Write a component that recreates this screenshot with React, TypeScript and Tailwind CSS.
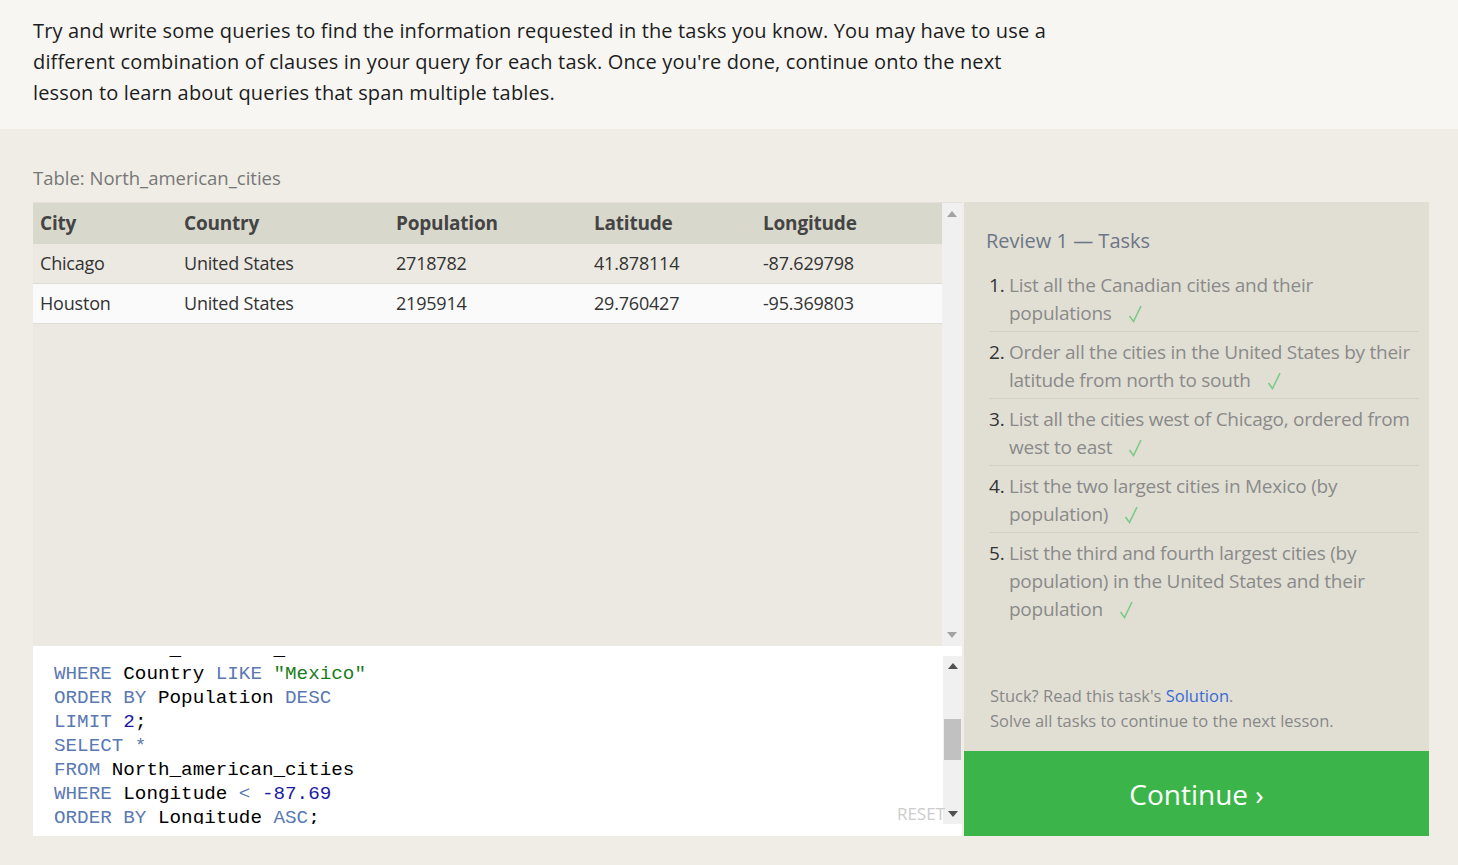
const cities = [
  { city: 'Chicago', country: 'United States', population: '2718782', lat: '41.878114', lng: '-87.629798' },
  { city: 'Houston', country: 'United States', population: '2195914', lat: '29.760427', lng: '-95.369803' },
];

const tasks = [
  'List all the Canadian cities and their populations',
  'Order all the cities in the United States by their latitude from north to south',
  'List all the cities west of Chicago, ordered from west to east',
  'List the two largest cities in Mexico (by population)',
  'List the third and fourth largest cities (by population) in the United States and their population',
];

const cols = 'grid grid-cols-[144px_212px_198px_169px_1fr]';

function K({ children }: { children: React.ReactNode }) {
  return <span className="text-[#5a79b3]">{children}</span>;
}

function Arrow({ up, color }: { up?: boolean; color: string }) {
  return (
    <svg width="10" height="6" viewBox="0 0 10 6" className="block">
      <polygon points={up ? '0,6 10,6 5,0' : '0,0 10,0 5,6'} fill={color} />
    </svg>
  );
}

function Check() {
  return (
    <svg width="14" height="18" viewBox="0 0 14 18" className="ml-[16px] inline-block align-[-3px]">
      <path d="M1.5 11 L5.5 16.5 L13 1" fill="none" stroke="#7cc98a" strokeWidth="1.6" />
    </svg>
  );
}

export default function App() {
  return (
    <div className="min-h-screen bg-[#efede6] text-[#222]" style={{ fontFamily: '"Open Sans", "Noto Sans", sans-serif' }}>
      <div className="h-[129px] bg-[#f7f6f2] px-[33px] pt-[15px]">
        <p className="text-[20px] leading-[31px] tracking-[0.15px] text-[#1d1d1d]">
          Try and write some queries to find the information requested in the tasks you know. You may have to use a
          <br />
          different combination of clauses in your query for each task. Once you're done, continue onto the next
          <br />
          lesson to learn about queries that span multiple tables.
        </p>
      </div>

      <div className="flex gap-[2px] pl-[33px] pt-[36px]">
        <div className="w-[929px] shrink-0">
          <div className="mb-[11px] text-[18.5px] leading-[26px] text-[#777]">Table: North_american_cities</div>

          <div className="flex h-[444px] border-t border-[#e2e0d8]">
            <div className="flex-1 bg-[#ebe9e1]">
              <div
                className={`${cols} h-[41px] items-center bg-[#d9d8cc] pl-[7px] text-[19px] font-bold tracking-[-0.2px] text-[#444]`}
              >
                <div>City</div>
                <div>Country</div>
                <div>Population</div>
                <div>Latitude</div>
                <div>Longitude</div>
              </div>
              {cities.map((c, i) => (
                <div
                  key={c.city}
                  className={`${cols} h-[40px] items-center border-b border-[#dedcd4] pl-[7px] text-[18px] tracking-[-0.2px] text-[#333] ${
                    i % 2 ? 'bg-[#fafafa]' : 'bg-[#ebe9e1]'
                  }`}
                >
                  <div>{c.city}</div>
                  <div>{c.country}</div>
                  <div>{c.population}</div>
                  <div>{c.lat}</div>
                  <div>{c.lng}</div>
                </div>
              ))}
            </div>
            <div className="flex w-[20px] flex-col items-center justify-between bg-[#f0f0f0] py-[8px]">
              <Arrow up color="#a3a3a3" />
              <Arrow color="#a3a3a3" />
            </div>
          </div>

          <div className="relative flex h-[190px] bg-white pt-[10px]">
            <div className="h-[168px] flex-1 overflow-hidden pl-[21px]">
              <pre
                className="-mt-[18px] text-[19.25px] leading-[24px] text-black"
                style={{ fontFamily: '"Liberation Mono", monospace' }}
              >
                <K>FROM</K> North_american_cities{'\n'}
                <K>WHERE</K> Country <K>LIKE</K> <span className="text-[#1b7d1b]">"Mexico"</span>{'\n'}
                <K>ORDER BY</K> Population <K>DESC</K>{'\n'}
                <K>LIMIT</K> <span className="text-[#1a1aa6]">2</span>;{'\n'}
                <K>SELECT *</K>{'\n'}
                <K>FROM</K> North_american_cities{'\n'}
                <K>WHERE</K> Longitude <K>&lt;</K> <span className="text-[#1a1aa6]">-87.69</span>{'\n'}
                <K>ORDER BY</K> Longitude <K>ASC</K>;
              </pre>
            </div>
            <div className="mb-[12px] flex w-[19px] flex-col items-center bg-[#f0f0f0] pt-[7px] pb-[7px]">
              <Arrow up color="#505050" />
              <div className="mt-[50px] h-[41px] w-[17px] bg-[#c1c1c1]" />
              <div className="flex-1" />
              <Arrow color="#505050" />
            </div>
            <span className="absolute right-[17px] bottom-[12px] text-[17px] leading-[20px] text-[#cccccc]">RESET</span>
          </div>
        </div>

        <div className="mt-[37px] flex w-[465px] shrink-0 flex-col">
          <div className="h-[549px] bg-[#e1dfd4] pt-[26px] pr-[10px] pl-[22px]">
            <h3 className="text-[20px] leading-[26px] text-[#6d7686]">Review 1 — Tasks</h3>
            <ol className="mt-[11px] pl-[3px]">
              {tasks.map((t, i) => (
                <li
                  key={i}
                  className={`flex pt-[6px] pb-[4px] text-[19px] leading-[28px] tracking-[-0.25px] ${
                    i < tasks.length - 1 ? 'border-b border-[#d3d1c6]' : ''
                  }`}
                >
                  <span className="w-[20px] shrink-0 text-[#333]">{i + 1}.</span>
                  <span className="text-[#8a8a8a]">
                    {t}
                    <Check />
                  </span>
                </li>
              ))}
            </ol>
            <div className="mt-[56px] pl-[4px] text-[16.5px] leading-[25px] text-[#888]">
              <p>
                Stuck? Read this task's <span className="text-[#3a6ad6]">Solution</span>.
              </p>
              <p>Solve all tasks to continue to the next lesson.</p>
            </div>
          </div>
          <button className="h-[85px] bg-[#3bb54a] text-[28px] text-white">Continue ›</button>
        </div>
      </div>
    </div>
  );
}
